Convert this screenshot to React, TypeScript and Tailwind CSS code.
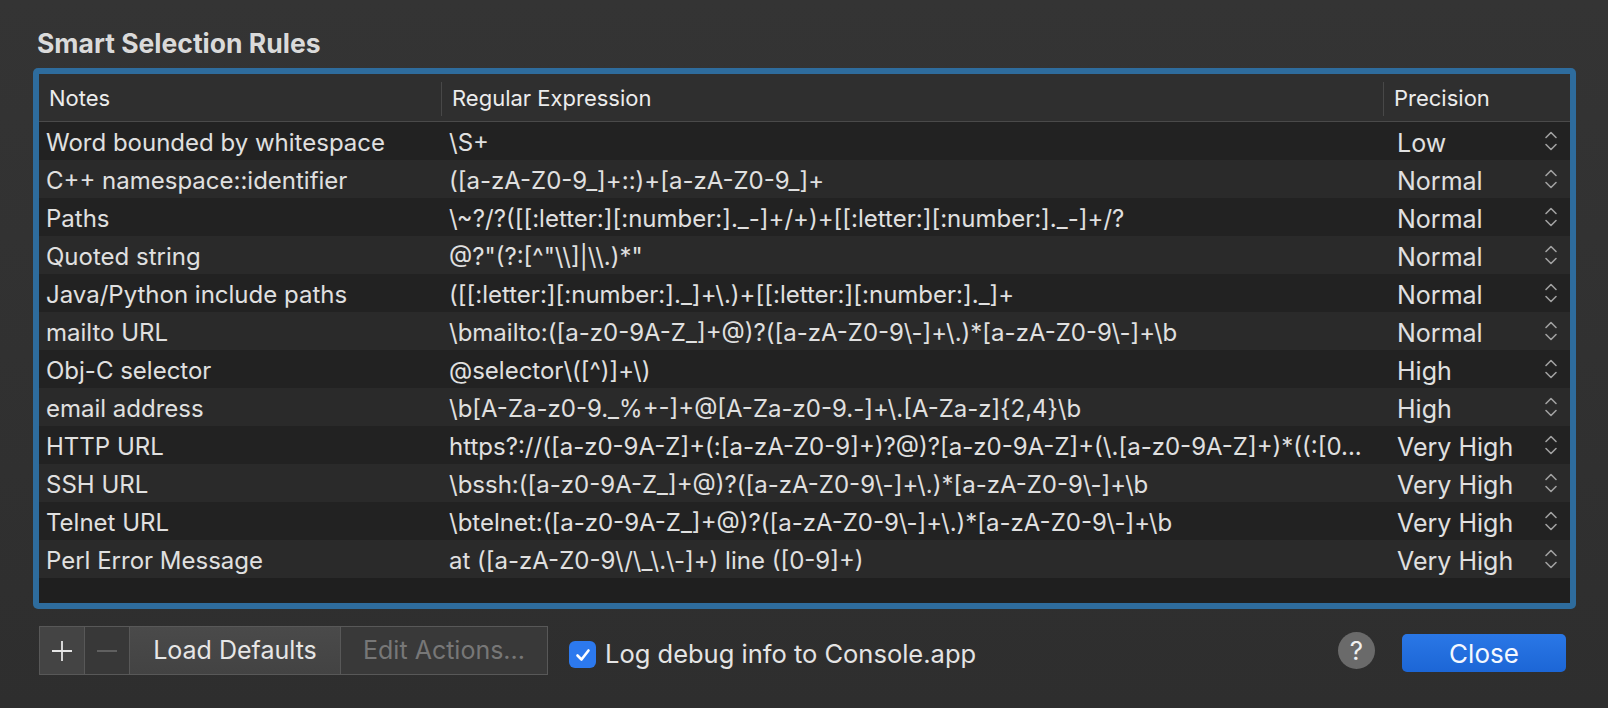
const rows: [string, string, string][] = [
  ["Word bounded by whitespace", String.raw`\S+`, "Low"],
  ["C++ namespace::identifier", String.raw`([a-zA-Z0-9_]+::)+[a-zA-Z0-9_]+`, "Normal"],
  ["Paths", String.raw`\~?/?([[:letter:][:number:]._-]+/+)+[[:letter:][:number:]._-]+/?`, "Normal"],
  ["Quoted string", String.raw`@?"(?:[^"\\]|\\.)*"`, "Normal"],
  ["Java/Python include paths", String.raw`([[:letter:][:number:]._]+\.)+[[:letter:][:number:]._]+`, "Normal"],
  ["mailto URL", String.raw`\bmailto:([a-z0-9A-Z_]+@)?([a-zA-Z0-9\-]+\.)*[a-zA-Z0-9\-]+\b`, "Normal"],
  ["Obj-C selector", String.raw`@selector\([^)]+\)`, "High"],
  ["email address", String.raw`\b[A-Za-z0-9._%+-]+@[A-Za-z0-9.-]+\.[A-Za-z]{2,4}\b`, "High"],
  ["HTTP URL", String.raw`https?://([a-z0-9A-Z]+(:[a-zA-Z0-9]+)?@)?[a-z0-9A-Z]+(\.[a-z0-9A-Z]+)*((:[0...`, "Very High"],
  ["SSH URL", String.raw`\bssh:([a-z0-9A-Z_]+@)?([a-zA-Z0-9\-]+\.)*[a-zA-Z0-9\-]+\b`, "Very High"],
  ["Telnet URL", String.raw`\btelnet:([a-z0-9A-Z_]+@)?([a-zA-Z0-9\-]+\.)*[a-zA-Z0-9\-]+\b`, "Very High"],
  ["Perl Error Message", String.raw`at ([a-zA-Z0-9\/\_\.\-]+) line ([0-9]+)`, "Very High"],
];

function Stepper() {
  return (
    <svg width="14" height="24" viewBox="0 0 14 24" fill="none" stroke="#a0a0a0" strokeWidth="1.6" strokeLinecap="round" strokeLinejoin="round">
      <path d="M2 8.5 L7 3.5 L12 8.5" />
      <path d="M2 15.5 L7 20.5 L12 15.5" />
    </svg>
  );
}

export default function App() {
  return (
    <div
      className="w-[1608px] h-[708px] bg-gradient-to-b from-[#343434] to-[#2e2e2e] text-[#e2e2e2] flex flex-col pl-[33px] pr-[32px] pt-[28px]"
      style={{ fontFamily: "Inter, 'Noto Sans', sans-serif" }}
    >
      <h1 className="text-[26.5px] leading-[30px] font-bold text-[#dadada] pl-[4px]">Smart Selection Rules</h1>

      <div className="mt-[10px] rounded-[5px] bg-[#2e6c9d] p-[6px]">
        <div className="bg-[#202020] flex flex-col h-[529px] overflow-hidden">
          <div className="h-[48px] shrink-0 bg-[#2f2f2f] flex items-center pt-[2px] text-[22px] text-[#ececec] border-b border-[#4a4a4a]">
            <div className="w-[402px] pl-[10px]">Notes</div>
            <div className="w-[942px] h-[34px] border-l border-[#484848] flex items-center pl-[10px]">Regular Expression</div>
            <div className="flex-1 h-[34px] border-l border-[#484848] flex items-center pl-[10px]">Precision</div>
          </div>
          {rows.map(([note, re, prec], i) => (
            <div
              key={note}
              className={`h-[38px] shrink-0 flex items-center pt-[4px] text-[24px] leading-[28px] text-[#e0e0e0] ${i % 2 === 0 ? "bg-[#222222]" : "bg-[#2a2a2a]"}`}
            >
              <div className="w-[402px] pl-[7px] truncate">{note}</div>
              <div className="w-[942px] pl-[8px] pr-[4px] truncate">{re}</div>
              <div className="flex-1 flex items-center justify-between pl-[14px] pr-[12px] text-[25px]">
                <span>{prec}</span>
                <span className="-mt-[4px]">
                  <Stepper />
                </span>
              </div>
            </div>
          ))}
          <div className="h-[24px] shrink-0 bg-[#1f1f1f]" />
        </div>
      </div>

      <div className="mt-[17px] flex items-center">
        <div className="flex h-[49px] ml-[6px] border border-[#585858] text-[25px]">
          <div className="w-[45px] bg-[#444444] flex items-center justify-center border-r border-[#585858]">
            <svg width="22" height="22" viewBox="0 0 22 22" stroke="#e6e6e6" strokeWidth="1.8">
              <path d="M11 1 V21 M1 11 H21" />
            </svg>
          </div>
          <div className="w-[45px] bg-[#383838] flex items-center justify-center border-r border-[#585858]">
            <svg width="20" height="4" viewBox="0 0 20 4" stroke="#666666" strokeWidth="1.8">
              <path d="M0 2 H20" />
            </svg>
          </div>
          <div className="w-[211px] bg-gradient-to-b from-[#4a4a4a] to-[#434343] flex items-center justify-center border-r border-[#585858] text-[#e6e6e6]">
            Load Defaults
          </div>
          <div className="w-[206px] bg-[#393939] flex items-center justify-center text-[#777777]">
            Edit Actions...
          </div>
        </div>

        <label className="ml-[21px] mt-[8px] flex items-center gap-[9px] text-[25.5px] text-[#e4e4e4]">
          <span className="w-[27px] h-[27px] rounded-[6px] bg-[#2c79ee] flex items-center justify-center">
            <svg width="18" height="18" viewBox="0 0 18 18" fill="none" stroke="#ffffff" strokeWidth="2.6" strokeLinecap="round" strokeLinejoin="round">
              <path d="M3.5 9.5 L7.5 13.5 L14.5 4.5" />
            </svg>
          </span>
          Log debug info to Console.app
        </label>

        <div className="ml-auto w-[37px] h-[37px] rounded-full bg-[#6a6a6a] flex items-center justify-center text-[26px] text-[#f0f0f0]">
          ?
        </div>
        <button className="ml-[27px] mr-[10px] mt-[4px] w-[164px] h-[38px] rounded-[5px] bg-gradient-to-b from-[#2a77e6] to-[#1c66d6] text-[26px] text-[#f4f8ff]">
          Close
        </button>
      </div>
    </div>
  );
}
